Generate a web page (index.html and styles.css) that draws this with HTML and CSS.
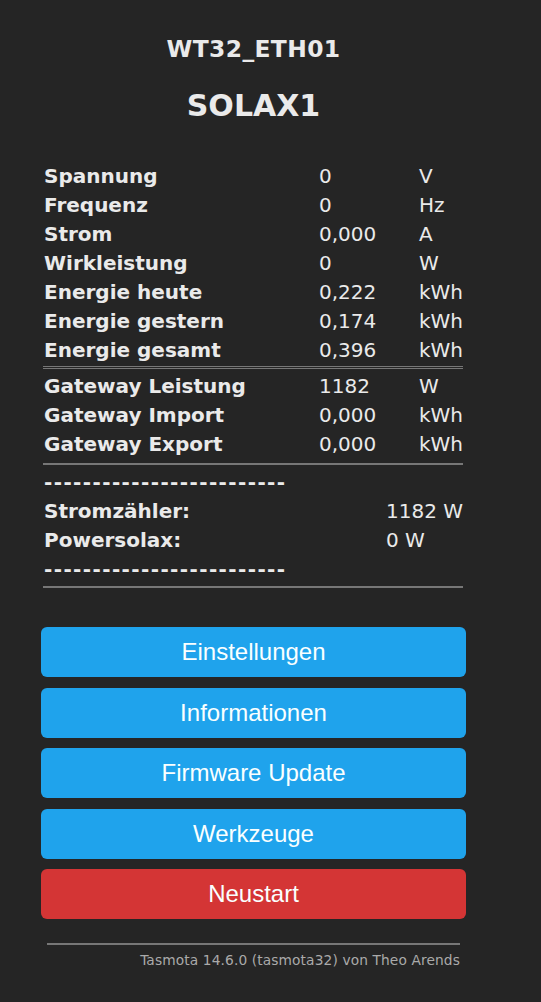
FILE: index.html
```html
<!DOCTYPE html>
<html lang="de">
<head>
<meta charset="utf-8">
<title>SOLAX1 - Hauptmenü</title>
<link rel="stylesheet" href="styles.css">
</head>
<body>
<div class="page">
  <div class="head">
    <h3 class="module">WT32_ETH01</h3>
    <h2 class="device">SOLAX1</h2>
  </div>
  <div class="sensors">
    <div class="row"><span class="lbl">Spannung</span><span class="val">0</span><span class="unit">V</span></div>
    <div class="row"><span class="lbl">Frequenz</span><span class="val">0</span><span class="unit">Hz</span></div>
    <div class="row"><span class="lbl">Strom</span><span class="val">0,000</span><span class="unit">A</span></div>
    <div class="row"><span class="lbl">Wirkleistung</span><span class="val">0</span><span class="unit">W</span></div>
    <div class="row"><span class="lbl">Energie heute</span><span class="val">0,222</span><span class="unit">kWh</span></div>
    <div class="row"><span class="lbl">Energie gestern</span><span class="val">0,174</span><span class="unit">kWh</span></div>
    <div class="row"><span class="lbl">Energie gesamt</span><span class="val">0,396</span><span class="unit">kWh</span></div>
    <div class="sep-double"></div>
    <div class="row"><span class="lbl">Gateway Leistung</span><span class="val">1182</span><span class="unit">W</span></div>
    <div class="row"><span class="lbl">Gateway Import</span><span class="val">0,000</span><span class="unit">kWh</span></div>
    <div class="row"><span class="lbl">Gateway Export</span><span class="val">0,000</span><span class="unit">kWh</span></div>
    <div class="sep"></div>
    <div class="row dashes"><span class="lbl">-------------------------</span></div>
    <div class="row row2"><span class="lbl">Stromzähler:</span><span class="val">1182 W</span></div>
    <div class="row row2"><span class="lbl">Powersolax:</span><span class="val">0 W</span></div>
    <div class="row dashes"><span class="lbl">-------------------------</span></div>
    <div class="sep sep-last"></div>
  </div>
  <div class="buttons">
    <button class="btn">Einstellungen</button>
    <button class="btn">Informationen</button>
    <button class="btn">Firmware Update</button>
    <button class="btn">Werkzeuge</button>
    <button class="btn btn-red">Neustart</button>
  </div>
  <div class="footer">
    <div class="footer-rule"></div>
    <a class="footer-link" href="#">Tasmota 14.6.0 (tasmota32) von Theo Arends</a>
  </div>
</div>
</body>
</html>
```

FILE: styles.css
```css
html, body {
  margin: 0;
  padding: 0;
  background: #252525;
}

body {
  color: #eaeaea;
  font-family: "DejaVu Sans", Verdana, sans-serif;
}

.page {
  width: 425px;
  margin-left: 41px;
  padding-top: 34px;
}

.head {
  text-align: center;
}

.module {
  margin: 0;
  font-size: 23.4px;
  line-height: 30px;
  font-weight: bold;
  letter-spacing: 0.4px;
}

.device {
  margin: 24px 0 38px;
  font-size: 30px;
  line-height: 36px;
  font-weight: bold;
}

.sensors {
  margin: 0 3px 0 2px;
}

.row {
  display: grid;
  grid-template-columns: 275px 100px auto;
  height: 29px;
  line-height: 29px;
  padding-left: 1px;
  font-size: 20px;
  white-space: nowrap;
}

.row2 {
  grid-template-columns: 342px auto;
}

.lbl {
  font-weight: bold;
}

.dashes .lbl {
  letter-spacing: 1.4px;
}

.sep-double {
  height: 1px;
  border-top: 1px solid #777;
  border-bottom: 1px solid #777;
  margin: 1px 0 3px;
}

.sep {
  height: 2px;
  background: #777;
  margin: 4px 0 3px;
}

.sep-last {
  margin: 2px 0 0;
}

.buttons {
  margin-top: 39px;
  display: flex;
  flex-direction: column;
  gap: 10.5px;
}

.btn {
  display: block;
  width: 100%;
  height: 50px;
  padding: 0;
  border: 0;
  border-radius: 6px;
  background: #1fa3ec;
  color: #faffff;
  font-family: "Liberation Sans", Arial, sans-serif;
  font-size: 24px;
  line-height: 50px;
  text-align: center;
}

.btn-red {
  background: #d43535;
}

.footer {
  margin-top: 24px;
  padding: 0 6px;
  text-align: right;
}

.footer-rule {
  height: 2px;
  background: #777;
}

.footer-link {
  display: block;
  margin-top: 6px;
  font-size: 13.75px;
  line-height: 18px;
  letter-spacing: 0.12px;
  color: #aaa;
  text-decoration: none;
}
```
